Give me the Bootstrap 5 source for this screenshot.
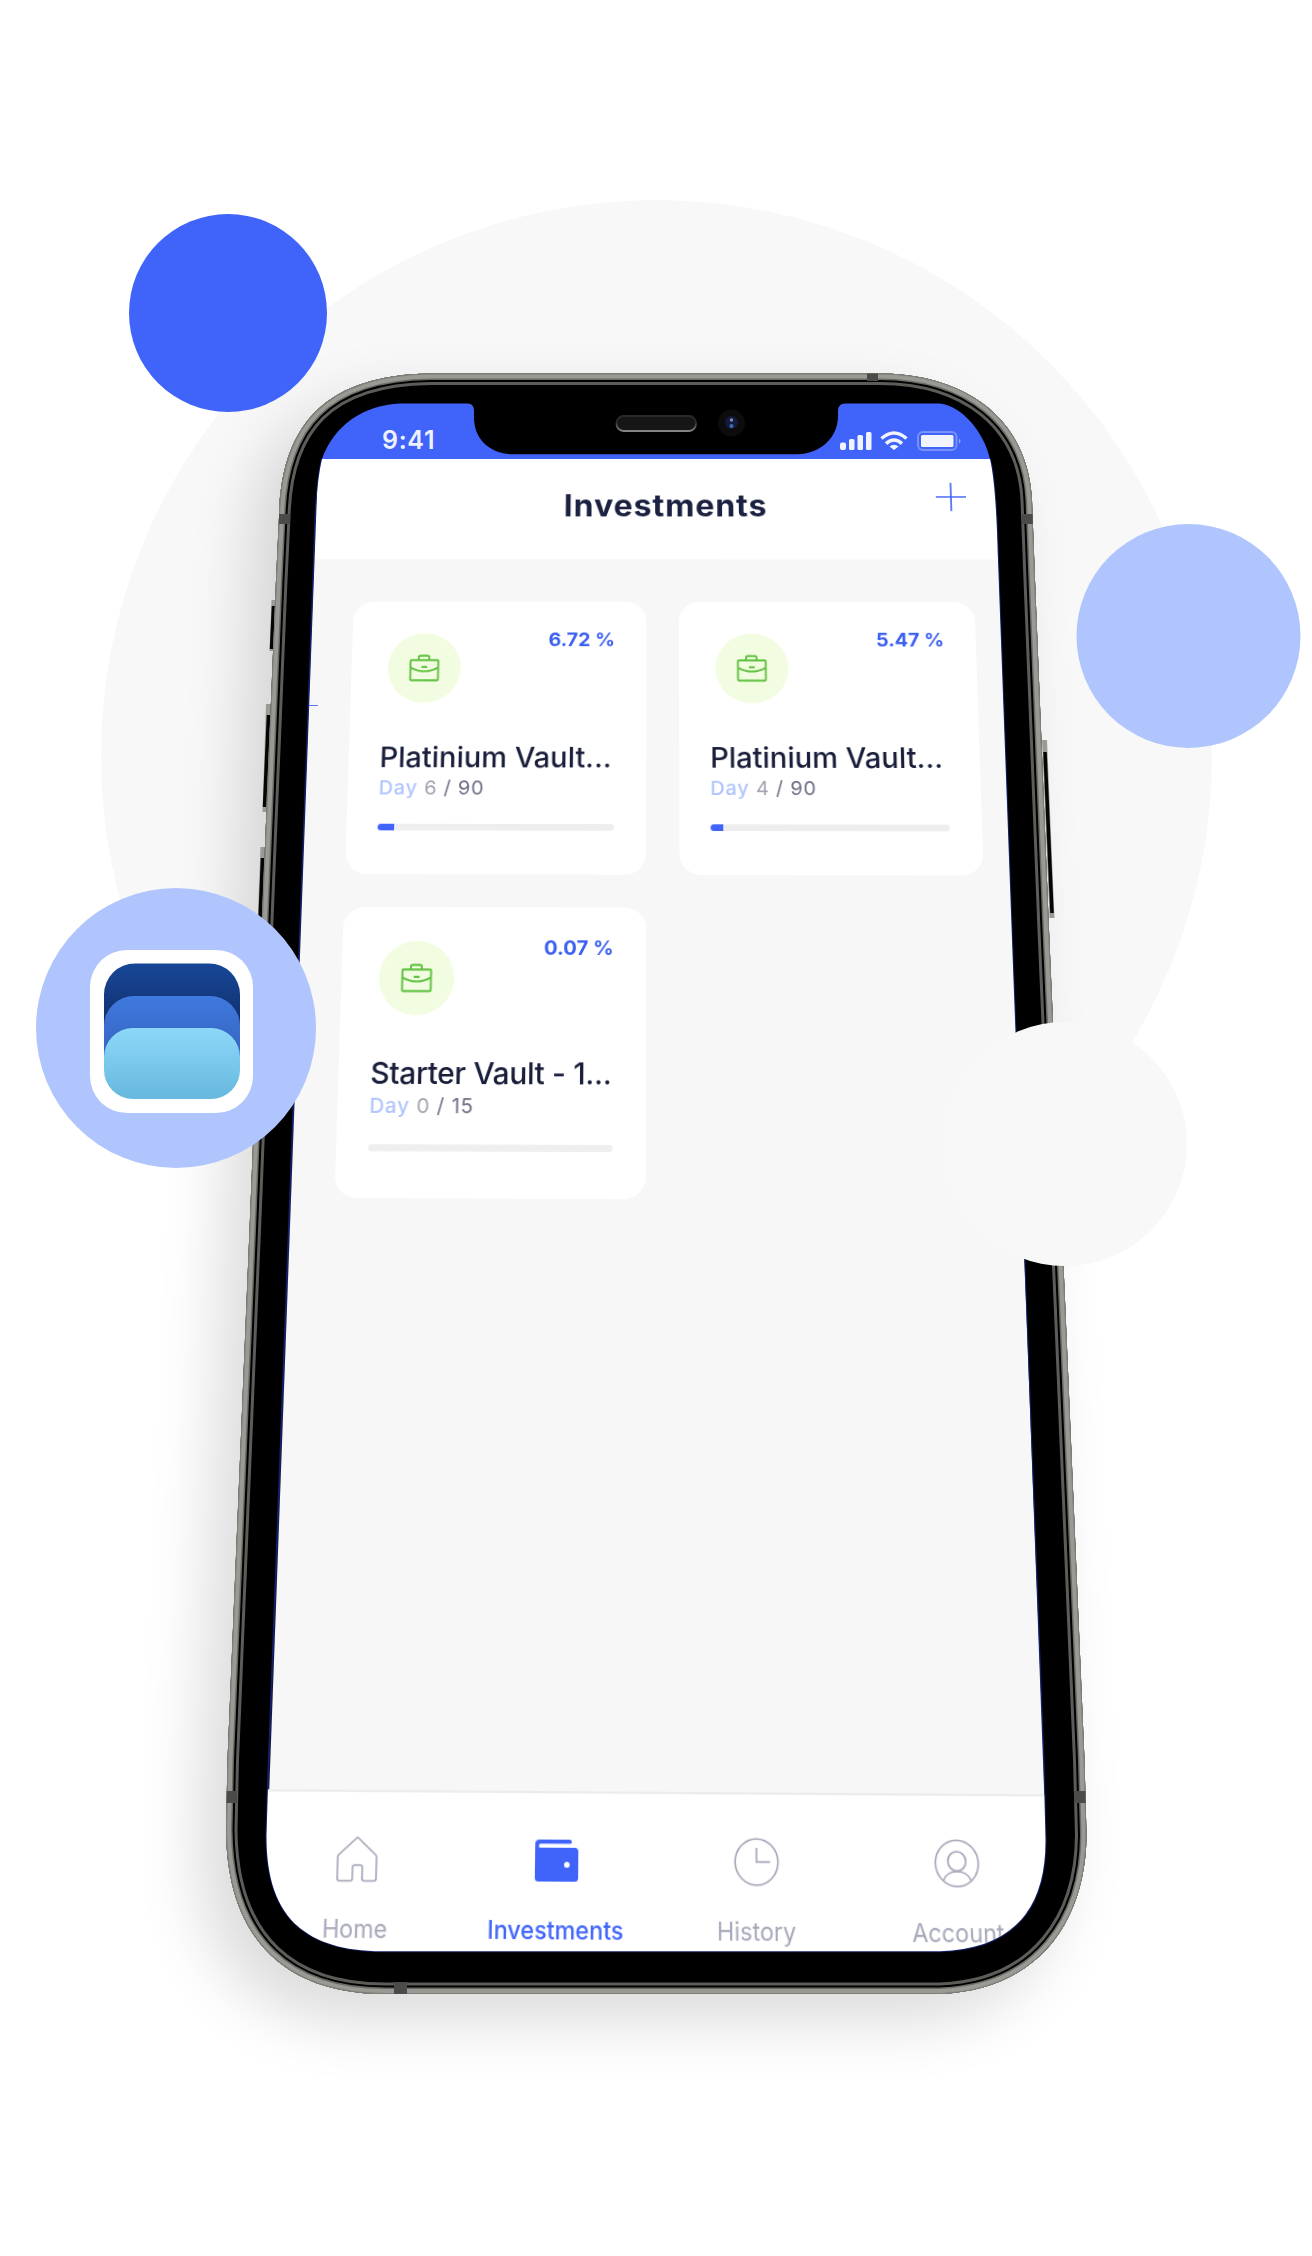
<!DOCTYPE html>
<html lang="en">
<head>
<meta charset="utf-8">
<meta name="viewport" content="width=device-width, initial-scale=1">
<title>Investments</title>
<link href="https://cdn.jsdelivr.net/npm/bootstrap@5.3.0/dist/css/bootstrap.min.css" rel="stylesheet">
<style>
  :root { --blue: #4064fa; --pale: #b0c5fe; --ink: #191e3a; --muted: #a6a8b9; }
  body { font-family: Inter, "Liberation Sans", sans-serif; background: #fff; }
  .stage { width: 1312px; height: 2256px; }
  .layer { left: 0; top: 0; width: 1312px; height: 2256px; }
  .screen { clip-path: path("M400 403.5 H940 C962 406 984 432 990 459 C995 480 997 520 998 560 L1013.5 980 L1043.5 1760 L1045.5 1840 C1046 1912 1010 1949 940 1951.3 H382 C300 1951 266 1912 266.5 1835 L268.5 1770 L301 910 L313.5 575 C315 520 316 485 322 459 C334 425 364 405 400 403.5 Z"); }
  .statusbar { height: 459px; background: var(--blue); padding: 423.5px 350px 0 382px; }
  .clock-time { font-size: 25px; line-height: 32px; font-weight: 600; color: #eef1ff; letter-spacing: .7px; }
  /* the app is a flat 722px page, tilted back into the device */
  .app { width: 722px; height: 1470px; left: 0; top: 0; background: #f7f7f7; transform-origin: 0 0;
    transform: matrix3d(.996786,-.0022491,0,-.0000049,-.067142,.890021,0,-.00010235,0,0,1,0,340.24,490.657,0,1.06897); }
  .app-head { height: 113px; background: #fff; padding: 26px 31px 0 48px; }
  .app-title { font-size: 34px; line-height: 40px; font-weight: 700; color: #1b2141; letter-spacing: 1px; margin: 6.5px 0 0 215px; }
  .cards { padding: 47px 27px 0 43px; display: grid; grid-template-columns: 308px 310px; gap: 34px 34px; }
  .vault { height: 293px; border-radius: 22px; background: #fff; padding: 31px 33px 0 32px; }
  .vault-icon { width: 76px; height: 76px; border-radius: 50%; background: #f2fce0; margin: 4px 0 0 6px; }
  .rate { font-size: 20.5px; line-height: 21px; font-weight: 700; color: #3b5ff0; }
  .vault-name { font-size: 30px; line-height: 36px; font-weight: 500; color: var(--ink); margin-top: 40px; }
  .vault-name.tight { letter-spacing: -.35px; }
  .days { font-size: 20.5px; line-height: 24px; margin-top: 3px; color: #6c6e85; letter-spacing: .8px; }
  .days .d { color: var(--pale); font-weight: 500; } .days .n { color: #a3a4b2; }
  .progress.bar { height: 7px; margin-top: 25.5px; background: #eee; border-radius: 4px; }
  .progress.bar .progress-bar { background: var(--blue); }
  .tabs { height: 145px; top: 1325px; left: -9px; width: 740px; background: #fff; border-top: 2px solid #ececec; padding-top: 37px; }
  .tabs .tab { width: 185px; color: var(--muted); font-size: 21.5px; line-height: 25px; }
  .tabs .tab.on { color: var(--blue); font-weight: 500; }
  .tabs svg { margin-bottom: 26px; }
</style>
<script src="https://cdn.jsdelivr.net/npm/bootstrap@5.3.0/dist/js/bootstrap.bundle.min.js"></script>
</head>
<body>
<main class="stage position-relative overflow-hidden">
  <svg class="layer position-absolute" viewBox="0 0 1312 2256" aria-hidden="true">
    <defs>
      <path id="body" d="M430 373.5 H880 C968 374 1028 420 1032 500 L1035 580 L1049 930 L1065 1300 L1084.500 1760 L1086.500 1835 C1086 1920 1040 1990 940 1994 H385 C290 1994 227 1944 226 1830 L227.500 1760 L249.500 1230 L264 870 L276 580 L279 517 C281 425 325 375 430 373.500 Z"/>
      <clipPath id="bodyClip"><use href="#body"/></clipPath>
      <filter id="soft" x="-30%" y="-20%" width="160%" height="140%"><feGaussianBlur stdDeviation="32"/></filter>
    </defs>
    <circle cx="656.500" cy="755.500" r="555.500" fill="#f8f8f8"/>
    <use href="#body" fill="#000" opacity=".14" filter="url(#soft)" transform="translate(-26 27)"/>
    <g stroke="#9a9a96" stroke-width="5" fill="none">
      <path d="M274 600 L272 651 M268.500 704 L265 812 M263 847 L259 950 M1044.500 740 L1052 918"/>
      <path stroke="#050505" stroke-width="3.500" d="M273.500 606 L271.500 649 M268.500 715 L264.500 807 M262.500 858 L259 945 M1045 752 L1052 913"/>
    </g>
    <g clip-path="url(#bodyClip)" fill="none">
      <use href="#body" fill="#000"/>
      <use href="#body" stroke="#5c5c59" stroke-width="23"/>
      <use href="#body" stroke="#000" stroke-width="17"/>
      <use href="#body" stroke="#6b6b66" stroke-width="13"/>
      <use href="#body" stroke="#999a93" stroke-width="10"/>
      <use href="#body" stroke="#7d7d79" stroke-width="2"/>
      <path fill="#4b4b49" d="M867 373h11v8h-11z M279 514h11v10h-11z M1022 514h12v10h-12z M226 1791h11v12h-11z M1074 1791h13v12h-13z M394 1982h13v12h-13z"/>
    </g>
    <path fill="none" stroke="#12206a" stroke-width="2" d="M990 459 C995 480 997 520 998 560 L1013.500 980 L1043.500 1760 L1045.500 1840 C1046 1912 1010 1949 940 1951.300 H382 C300 1951 266 1912 266.500 1835 L268.500 1770 L301 910 L313.500 575 C315 520 316 485 322 459"/>
  </svg>

  <section class="screen layer position-absolute">
    <div class="statusbar d-flex justify-content-between align-items-start">
      <span class="clock-time">9:41</span>
      <svg width="122" height="30" viewBox="840 423 122 30" fill="#f1f4ff">
        <rect x="840" y="441.500" width="6" height="7.500" rx="2"/><rect x="849" y="438" width="5.500" height="11" rx="1.500"/><rect x="857.500" y="434" width="5.500" height="15" rx="1.500"/><rect x="866" y="431" width="5.500" height="18" rx="1.500"/>
        <g fill="none" stroke="#f1f4ff" stroke-width="3.500"><path d="M881.500 437.500 Q894 426.500 906.500 437.500"/><path d="M886 442.600 Q894 435.500 902 442.600"/></g><path d="M889.500 445.500 Q894 442 898.500 445.500 L894 449 Z"/>
        <rect x="918" y="431" width="38.500" height="18" rx="5" fill="none" stroke="#fff" stroke-opacity=".3" stroke-width="2"/><rect x="921" y="434" width="32.500" height="12" rx="1.500"/><path d="M959 437.500q3 2.500 0 5z" opacity=".5"/>
      </svg>
    </div>
    <div class="app position-absolute">
      <header class="app-head d-flex justify-content-between align-items-start">
        <h1 class="app-title">Investments</h1>
        <svg width="34" height="34" viewBox="0 0 34 34" stroke="#4064fa" stroke-width="1.700"><path d="M17 1v32M1 17h32"/></svg>
      </header>
      <div class="cards">
        <article class="vault">
          <div class="d-flex justify-content-between align-items-start">
            <span class="vault-icon d-flex align-items-center justify-content-center"><svg width="32" height="30" viewBox="0 0 32 28" preserveAspectRatio="none" fill="none" stroke="#62c243" stroke-width="2"><rect x="1.500" y="6" width="29" height="20.500" rx="1"/><path d="M10 6V3.500Q10 1.500 12 1.500H19Q21 1.500 21 3.500V6M1.500 13.500Q16 21 30.500 13.500M13 13h6"/></svg></span>
            <span class="rate">6.72 %</span>
          </div>
          <div class="vault-name text-nowrap">Platinium Vault...</div>
          <div class="days"><span class="d">Day</span> <span class="n">6</span> / 90</div>
          <div class="progress bar"><div class="progress-bar" style="width:7%"></div></div>
        </article>
        <article class="vault">
          <div class="d-flex justify-content-between align-items-start">
            <span class="vault-icon d-flex align-items-center justify-content-center"><svg width="32" height="30" viewBox="0 0 32 28" preserveAspectRatio="none" fill="none" stroke="#62c243" stroke-width="2"><rect x="1.500" y="6" width="29" height="20.500" rx="1"/><path d="M10 6V3.500Q10 1.500 12 1.500H19Q21 1.500 21 3.500V6M1.500 13.500Q16 21 30.500 13.500M13 13h6"/></svg></span>
            <span class="rate">5.47 %</span>
          </div>
          <div class="vault-name text-nowrap">Platinium Vault...</div>
          <div class="days"><span class="d">Day</span> <span class="n">4</span> / 90</div>
          <div class="progress bar"><div class="progress-bar" style="width:5.5%"></div></div>
        </article>
        <article class="vault">
          <div class="d-flex justify-content-between align-items-start">
            <span class="vault-icon d-flex align-items-center justify-content-center"><svg width="32" height="30" viewBox="0 0 32 28" preserveAspectRatio="none" fill="none" stroke="#62c243" stroke-width="2"><rect x="1.500" y="6" width="29" height="20.500" rx="1"/><path d="M10 6V3.500Q10 1.500 12 1.500H19Q21 1.500 21 3.500V6M1.500 13.500Q16 21 30.500 13.500M13 13h6"/></svg></span>
            <span class="rate">0.07 %</span>
          </div>
          <div class="vault-name tight text-nowrap">Starter Vault - 1...</div>
          <div class="days"><span class="d">Day</span> <span class="n">0</span> / 15</div>
          <div class="progress bar"><div class="progress-bar" style="width:0%"></div></div>
        </article>
      </div>
      <nav class="tabs position-absolute d-flex">
        <div class="tab d-flex flex-column align-items-center"><svg width="42" height="42" viewBox="0 0 42 42" fill="none" stroke="#a6a8b9" stroke-width="1.600" stroke-linejoin="round"><path d="M21 2 L38.500 17.500 Q39 18 39 19 V37.500 Q39 39.500 37 39.500 H28 Q26 39.500 26 37.500 V28 Q26 26 24 26 H19 Q17 26 17 28 V37.500 Q17 39.500 15 39.500 H5 Q3 39.500 3 37.500 V19 Q3 18 3.500 17.500 Z"/></svg>Home</div>
        <div class="tab on d-flex flex-column align-items-center"><svg width="42" height="42" viewBox="0 0 42 42"><path fill="#4064fa" d="M5 3H33Q35 3 35 5T33 6.500H6Q4.500 6.500 4.500 8.500T6 10H38Q41 10 41 13V36Q41 39 38 39H4Q1 39 1 36V7Q1 3 5 3Z"/><circle cx="30.500" cy="24.500" r="2.600" fill="#fff"/></svg>Investments</div>
        <div class="tab d-flex flex-column align-items-center"><svg width="42" height="42" viewBox="0 0 42 42" fill="none" stroke="#a6a8b9" stroke-width="1.600"><circle cx="21" cy="21" r="19.800"/><path d="M21 9V21H33.500"/></svg>History</div>
        <div class="tab d-flex flex-column align-items-center"><svg width="42" height="42" viewBox="0 0 42 42" fill="none" stroke="#a6a8b9" stroke-width="1.600"><circle cx="21" cy="21" r="19.800"/><circle cx="21" cy="19.300" r="8.300"/><path d="M8.500 35.500C12 25.500 30 25.500 33.500 35.500"/></svg>Account</div>
      </nav>
    </div>
  </section>

  <svg class="layer position-absolute" viewBox="0 0 1312 2256" aria-hidden="true">
    <defs>
      <linearGradient id="g1" x2="0" y2="1"><stop stop-color="#174797"/><stop offset=".5" stop-color="#12306f"/></linearGradient>
      <linearGradient id="g2" x2="0" y2="1"><stop stop-color="#3f79de"/><stop offset=".7" stop-color="#3562bd"/></linearGradient>
      <linearGradient id="g3" x2="0" y2="1"><stop stop-color="#8cd8fa"/><stop offset="1" stop-color="#67b8de"/></linearGradient>
      <linearGradient id="spk" x2="0" y2="1"><stop offset=".4" stop-color="#2a2a2a"/><stop offset="1" stop-color="#858585"/></linearGradient>
    </defs>
    <path d="M462 400 V403 H467 Q474 403.500 474 411 V417 C474 440 490 454 514 454.300 H797 C820 454 838 438 838 416 V411 Q838 403.500 846 403 H850 V400 Z"/>
    <rect x="616.500" y="416" width="79.500" height="15" rx="7" fill="#161616" stroke="url(#spk)" stroke-width="1.800"/>
    <circle cx="731.500" cy="423" r="13.500" fill="#0c0c0d"/><circle cx="731.500" cy="422.500" r="6.500" fill="#131a3d"/><circle cx="731.500" cy="420" r="1.700" fill="#8888b0"/><circle cx="731.500" cy="426" r="2" fill="#416cad"/>
    <path d="M309 705.500H318" stroke="#5b78ee"/>
    <circle cx="228" cy="313" r="99" fill="#4064fa"/>
    <circle cx="1188.500" cy="636" r="112" fill="#b0c5fe"/>
    <circle cx="1065" cy="1144" r="122" fill="#f8f8f8"/>
    <circle cx="176" cy="1028" r="140" fill="#b0c5fe"/>
    <rect x="90" y="950" width="163" height="163" rx="37" fill="#fff"/>
    <rect x="104" y="963.500" width="136" height="120" rx="31" fill="url(#g1)"/>
    <rect x="104" y="996" width="136" height="95" rx="30" fill="url(#g2)"/>
    <rect x="104" y="1028" width="136" height="71" rx="29" fill="url(#g3)"/>
  </svg>
</main>
</body>
</html>
